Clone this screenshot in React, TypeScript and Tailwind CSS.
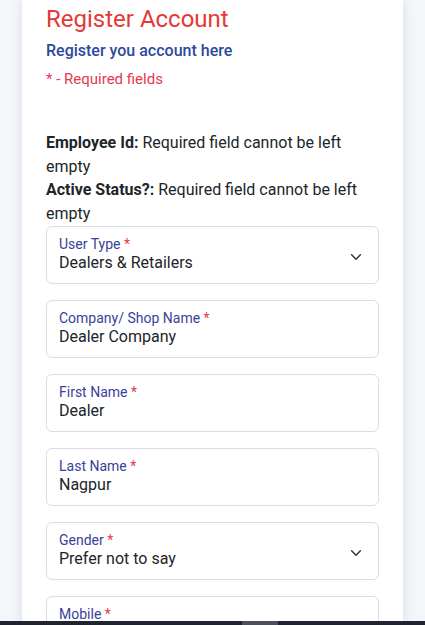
import React from "react";

type Field = { label: string; value: string; select?: boolean };

const fields: Field[] = [
  { label: "User Type", value: "Dealers & Retailers", select: true },
  { label: "Company/ Shop Name", value: "Dealer Company" },
  { label: "First Name", value: "Dealer" },
  { label: "Last Name", value: "Nagpur" },
  { label: "Gender", value: "Prefer not to say", select: true },
  { label: "Mobile", value: "" },
];

const Chevron = () => (
  <svg width="14" height="14" viewBox="0 0 16 16" fill="none" className="text-[#343a40]">
    <path d="M3 5.5l5 5 5-5" stroke="currentColor" strokeWidth="1.8" strokeLinecap="round" strokeLinejoin="round" />
  </svg>
);

const FormField = ({ label, value, select }: Field) => (
  <div className="h-[58px] rounded-md border border-[#dcdce6] bg-white pl-[12px] pr-[15px] pt-[8px] flex items-start justify-between">
    <div className="flex flex-col">
      <span className="text-[14px] leading-[18px] text-[#3a3f9a]">
        {label} <span className="text-[#e5394f]">*</span>
      </span>
      <span className="text-[16px] leading-[20px] text-[#212529]">{value}</span>
    </div>
    {select && (
      <div className="pt-[15px]">
        <Chevron />
      </div>
    )}
  </div>
);

export default function App() {
  return (
    <div
      className="min-h-screen bg-[#f4f7fa] px-[22px]"
      style={{ fontFamily: "Roboto, 'Noto Sans', sans-serif" }}
    >
      <div className="bg-white shadow-[0_0_12px_rgba(30,50,90,0.12)] px-[24px] pb-10 min-h-[625px]">
        <h1 className="pt-[4px] text-[24px] leading-[30px] text-[#e53935]">Register Account</h1>
        <p className="mt-[6px] text-[16px] leading-[22px] font-medium text-[#2c4a9c]">
          Register you account here
        </p>
        <p className="mt-[7px] text-[15px] leading-[20px] text-[#e5394f]">* - Required fields</p>

        <div className="mt-[42px] text-[16px] leading-[23.5px] text-[#212529]">
          <p>
            <b className="font-bold">Employee Id:</b> Required field cannot be left empty
          </p>
          <p>
            <b className="font-bold">Active Status?:</b> Required field cannot be left empty
          </p>
        </div>

        <div className="mt-[1px] flex flex-col gap-[16px]">
          {fields.map((f) => (
            <FormField key={f.label} {...f} />
          ))}
        </div>
      </div>
      <div className="fixed bottom-0 left-0 right-0 h-[4px] bg-[#1f2430] flex">
        <div className="ml-[242px] w-[36px] h-full bg-[#4a4f5a]" />
      </div>
    </div>
  );
}
